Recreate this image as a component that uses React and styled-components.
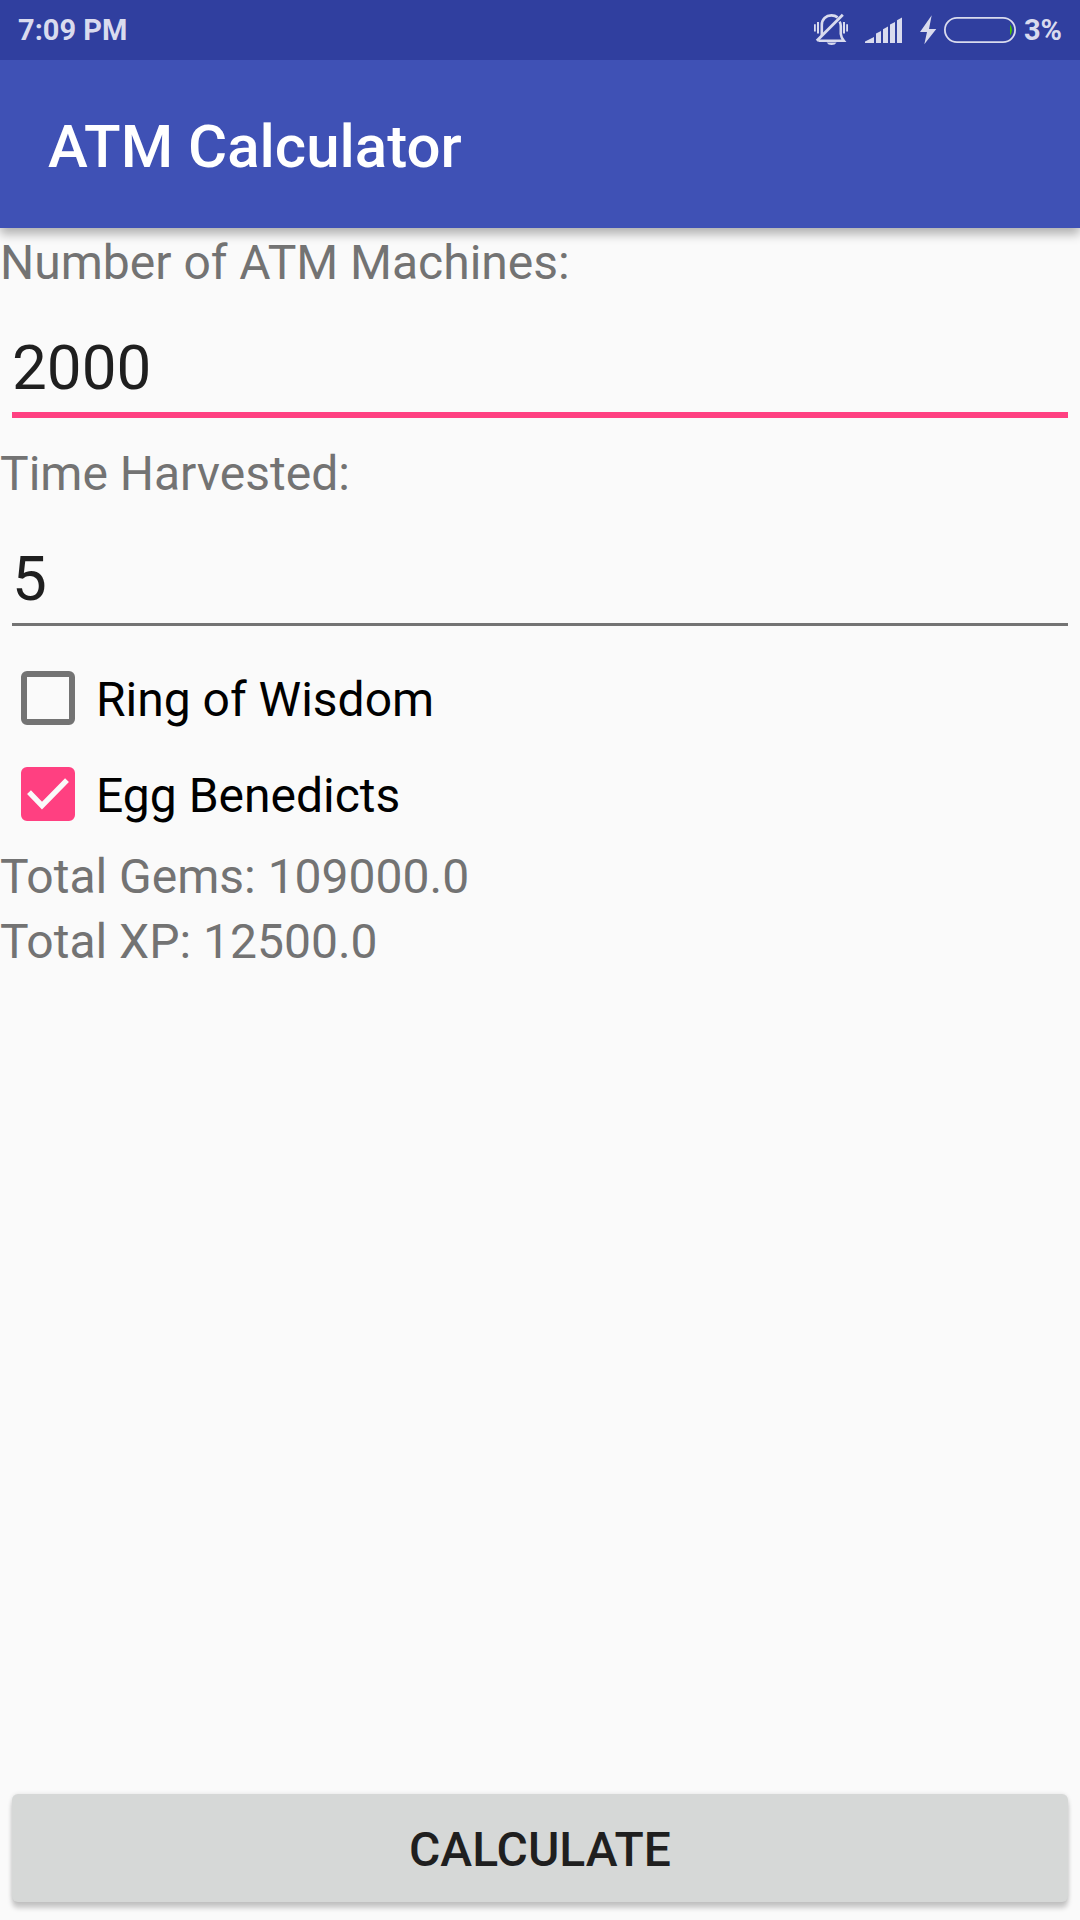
import React, { useState } from "react";
import styled, { createGlobalStyle } from "styled-components";

const theme = {
    primary: "#3f51b5",
    primaryDark: "#303f9f",
    accent: "#ff4081",
    background: "#fafafa",
    secondary: "#737373",
    text: "#1f1f1f",
    status: "#d9dbee"
};

const GlobalStyle = createGlobalStyle`
    * {
        box-sizing: border-box;
    }
    body {
        margin: 0;
        background: ${theme.background};
        font-family: Roboto, "Liberation Sans", sans-serif;
    }
`;
const Screen = styled.div`
    min-height: 100vh;
    display: flex;
    flex-direction: column;
`;
const StatusBar = styled.div`
    height: 60px;
    padding: 0 18px;
    display: flex;
    align-items: center;
    justify-content: space-between;
    background: ${theme.primaryDark};
    color: ${theme.status};
    font-size: 29px;
    font-weight: 700;
`;
const StatusIcons = styled.div`
    display: flex;
    align-items: center;
    gap: 8px;
`;
const StatusIcon = styled.svg`
    display: block;
    height: 60px;
    width: 202px;
`;
const AppBar = styled.header`
    height: 168px;
    padding: 4px 48px 0;
    display: flex;
    align-items: center;
    background: ${theme.primary};
    box-shadow: 0 6px 10px rgba(0, 0, 0, .3);
    clip-path: inset(0 0 -20px);
    h1 {
        margin: 0;
        color: #fff;
        font-size: 60px;
        font-weight: 500;
    }
`;
const Form = styled.form`
    flex: 1;
    display: flex;
    flex-direction: column;
`;
const Label = styled.label`
    padding-top: 4px;
    font-size: 48px;
    line-height: 61px;
    color: ${theme.secondary};
`;
const Total = styled(Label).attrs({ as: "output" })`
    display: block;
`;
const InputBox = styled.div`
    height: 146px;
    padding: 0 12px;
`;
const Input = styled.input`
    box-sizing: content-box;
    display: block;
    width: 100%;
    height: 90px;
    padding: 29px 0 0;
    border: 0;
    border-bottom: ${props => props.$active ? `6px solid ${theme.accent}` : `3px solid ${theme.secondary}`};
    border-radius: 0;
    outline: 0;
    background: transparent;
    color: ${theme.text};
    font: 400 62px Roboto, "Liberation Sans", sans-serif;
`;
const CheckRow = styled.div`
    height: 96px;
    padding-left: 21px;
    display: flex;
    align-items: center;
    gap: 21px;
    label {
        padding-top: 3px;
        color: #000;
        font-size: 48px;
        line-height: 61px;
    }
`;
const CheckBox = styled.span`
    display: grid;
    width: 54px;
    height: 54px;
    input, svg {
        grid-area: 1 / 1;
        width: 54px;
        height: 54px;
        margin: 0;
    }
    input {
        appearance: none;
        border: 6px solid ${theme.secondary};
        border-radius: 6px;
    }
    input:checked {
        border-color: ${theme.accent};
        background: ${theme.accent};
    }
    svg {
        pointer-events: none;
    }
`;
const Footer = styled.div`
    margin-top: auto;
    padding: 12px 12px 18px;
`;
const Button = styled.button`
    display: block;
    width: 100%;
    height: 108px;
    padding: 3px 0 0;
    border: 0;
    border-radius: 6px;
    background: #d6d8d7;
    box-shadow: 0 6px 5px rgba(0, 0, 0, .2), 0 0 4px rgba(0, 0, 0, .1);
    color: ${theme.text};
    font: 500 48px Roboto, "Liberation Sans", sans-serif;
    text-transform: uppercase;
`;

// vibrate bell, signal, charging bolt and battery
function Indicators() {
    return (
        <StatusIcon viewBox="14 0 202 60" fill={theme.status} aria-hidden="true">
            <path d="M14 24.3h1.8v7.2H14zM17 22h2v11.4h-2zM43 22h2v11.4h-2zM46.2 24.3H48v7.2h-1.8z" />
            <g fill="none" stroke={theme.status} strokeWidth="2.6">
                <path d="M16.8 40.8L42.8 14.8" strokeWidth="2.8" />
                <path d="M21.8 35.5V25C21.8 19 26 15.4 31.4 15.4Q35 15.4 37.6 17.4" />
                <path d="M39.6 21.6Q40.8 23.4 40.8 26V34Q41 37 43.8 40.7H18.4" />
            </g>
            <path d="M26.6 42.4h10Q35 45 31.6 45T26.6 42.4z" />
            <path d="M65 43v-1.5L74 37v6zM76 43v-9.5l5-2.4V43zM83 43V29.2l5-2.6V43zM90 43V24.6l5-2.6V43zM97 43V20.2l5-2.6V43z" />
            <path d="M131.7 15.3L120 32h7l-2.7 12.3L136.3 29H129z" />
            <rect x="144.9" y="17.9" width="70.2" height="24.2" rx="12.1" fill="none" stroke={theme.status} strokeWidth="1.8" />
            <path d="M210 24.3Q214 30 210 35.7z" fill="#44c000" />
        </StatusIcon>
    );
}
function Field(props) {
    return (
        <React.Fragment>
            <Label htmlFor={props.id}>{props.label}</Label>
            <InputBox>
                <Input
                    id={props.id}
                    type="text"
                    inputMode="numeric"
                    value={props.value}
                    $active={props.active === props.id}
                    onFocus={() => props.onActive(props.id)}
                    onChange={(event) => props.onChange(event.target.value)}
                />
            </InputBox>
        </React.Fragment>
    );
}
function Check(props) {
    return (
        <CheckRow>
            <CheckBox>
                <input id={props.id} type="checkbox" checked={props.checked} onChange={(event) => props.onChange(event.target.checked)} />
                {
                    props.checked ?
                        <svg viewBox="0 0 54 54" aria-hidden="true">
                            <path d="M8 25.2L21 38.7L46 13.2" fill="none" stroke={theme.background} strokeWidth="5.4" />
                        </svg>
                        :
                        null
                }
            </CheckBox>
            <label htmlFor={props.id}>{props.label}</label>
        </CheckRow>
    );
}
export default function App() {
    const [active, setActive] = useState("machines");
    const [machines, setMachines] = useState("2000");
    const [times, setTimes] = useState("5");
    const [ring, setRing] = useState(false);
    const [egg, setEgg] = useState(true);
    const [total, setTotal] = useState({ gems: 109000, xp: 12500 });

    const calculate = (event) => {
        event.preventDefault();
        const harvests = (Number(machines) || 0) * (Number(times) || 0);
        const bonus = 1 + (egg ? 0.25 : 0) + (ring ? 0.1 : 0);
        setTotal({ gems: harvests * 10.9, xp: harvests * bonus });
    };
    return (
        <Screen>
            <GlobalStyle />
            <StatusBar>
                <span>7:09 PM</span>
                <StatusIcons>
                    <Indicators />
                    <span>3%</span>
                </StatusIcons>
            </StatusBar>
            <AppBar>
                <h1>ATM Calculator</h1>
            </AppBar>
            <Form onSubmit={calculate}>
                <Field id="machines" label="Number of ATM Machines:" value={machines} onChange={setMachines} active={active} onActive={setActive} />
                <Field id="times" label="Time Harvested:" value={times} onChange={setTimes} active={active} onActive={setActive} />
                <Check id="ring" label="Ring of Wisdom" checked={ring} onChange={setRing} />
                <Check id="egg" label="Egg Benedicts" checked={egg} onChange={setEgg} />
                <Total>Total Gems: {total.gems.toFixed(1)}</Total>
                <Total>Total XP: {total.xp.toFixed(1)}</Total>
                <Footer>
                    <Button type="submit">Calculate</Button>
                </Footer>
            </Form>
        </Screen>
    );
}
